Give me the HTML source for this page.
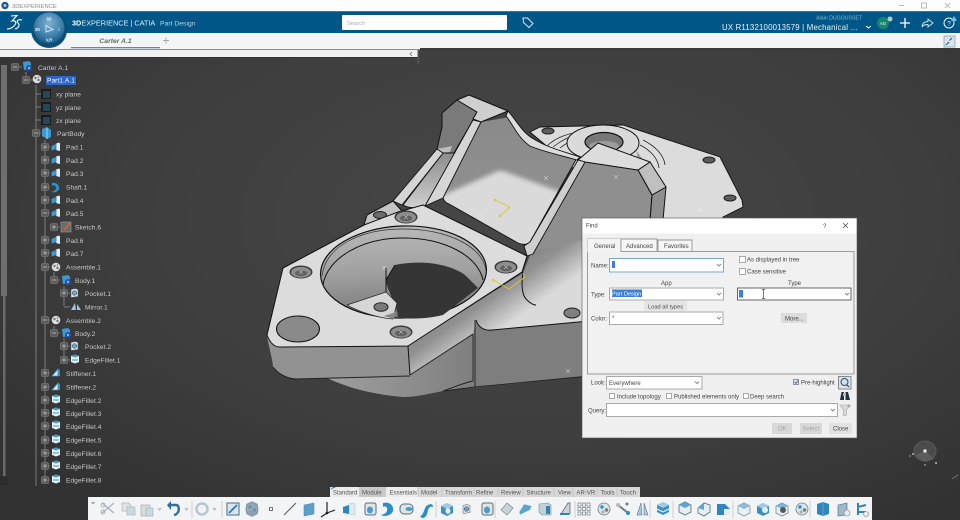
<!DOCTYPE html>
<html><head><meta charset="utf-8"><style>
html,body{margin:0;padding:0;width:960px;height:520px;overflow:hidden;background:#3c3c3c}
svg{position:absolute;left:0;top:0;display:block;filter:blur(.3px)}
text{font-family:"Liberation Sans",sans-serif}
.t text{font-size:6.6px;fill:#c8c8c8;letter-spacing:.05px}
.d text{font-size:6px;fill:#444}
.tb text{font-size:6px;fill:#555}
</style></head><body>
<svg width="960" height="520" viewBox="0 0 960 520" xmlns="http://www.w3.org/2000/svg">
<defs>
<filter id="soft" x="-20%" y="-20%" width="140%" height="140%"><feGaussianBlur stdDeviation="2.500"/></filter>
<clipPath id="pocketclip"><path d="M481 122 510 117 520 130 543 148 577 158 530 242C527 245 523 245 518 243L449 204C446 203 444 201 443 198z"/></clipPath>
<radialGradient id="bg" cx="55%" cy="42%" r="70%"><stop offset="0" stop-color="#474747"/><stop offset=".6" stop-color="#3e3e3e"/><stop offset="1" stop-color="#323232"/></radialGradient>
<linearGradient id="wall" x1="0" y1="0" x2="0" y2="1"><stop offset="0" stop-color="#8a8a8a"/><stop offset=".55" stop-color="#8f8f8f"/><stop offset="1" stop-color="#a8a8a8"/></linearGradient>
<linearGradient id="body" gradientUnits="userSpaceOnUse" x1="508" y1="274" x2="532" y2="308"><stop offset="0" stop-color="#8a8a8a"/><stop offset=".25" stop-color="#929292"/><stop offset="1" stop-color="#dadada"/></linearGradient>
<linearGradient id="slope" x1="0" y1="0" x2="0" y2="1"><stop offset="0" stop-color="#8c8c8c"/><stop offset="1" stop-color="#d0d0d0"/></linearGradient>
<linearGradient id="cyl" x1="0" y1="0" x2="1" y2="0"><stop offset="0" stop-color="#a0a0a0"/><stop offset=".6" stop-color="#7c7c7c"/><stop offset="1" stop-color="#6c6c6c"/></linearGradient>
<linearGradient id="hw" x1="0" y1="0" x2="0" y2="1"><stop offset="0" stop-color="#b8b8b8"/><stop offset=".5" stop-color="#a0a0a0"/><stop offset="1" stop-color="#777"/></linearGradient>
<radialGradient id="comp" cx="50%" cy="35%" r="70%"><stop offset="0" stop-color="#7fb2d2"/><stop offset=".55" stop-color="#4485ae"/><stop offset="1" stop-color="#0e5480"/></radialGradient>
<g id="pad"><path d="M-4.500-1 0-3v5l-4.500 1.500z" fill="#3a9bd0"/><path d="M0-3.500 3-4.500 4-3.500V4L0 3z" fill="#e4eef4"/><path d="M0-3.500V3" stroke="#2878a8" stroke-width=".8"/></g>
<g id="plane"><rect x="-5" y="-5" width="10" height="10" fill="#1c1c1c"/><rect x="-3" y="-3" width="7" height="7" fill="#1f4a5e"/></g>
<g id="ef"><path d="M-4-3 0-4.500 4-3V3L0 4.500-4 3z" fill="#e8f0f4"/><path d="M-4-3 0-4.500 4-3 0-1.500z" fill="#3a9bd0"/><path d="M-3 1 3 1" stroke="#3a9bd0"/></g>
<g id="stf"><path d="M-4 3 2 3 2-4z" fill="#d8e6ee" stroke="#3a8fc0" stroke-width=".8"/><path d="M2-4 4-3V3L2 3z" fill="#3a8fc0"/></g>
<g id="ps"><path d="M-4-3.500 0-4.500 3-3.500V3.500L-4 4.500z" fill="#dfe7ec" stroke="#556" stroke-width=".5"/><circle cx="-.5" cy="0" r="2.300" fill="#6fa8c8" stroke="#234" stroke-width=".5"/></g>
<g id="as"><circle r="4.300" fill="#ddd"/><circle cx="-1.500" cy="-1" r="1.200" fill="#777"/><circle cx="1.500" cy="1" r="1.200" fill="#777"/><circle cx="1.500" cy="-2" r=".8" fill="#777"/></g>
<g id="bd"><path d="M-4-4 2-5 4-3V3L-3 4z" fill="#3a9bd0"/><circle cx="2" cy="2" r="3" fill="#1d4fb4"/><circle cx="2" cy="2" r="1.200" fill="#8fb6e8"/></g>
<g id="mi"><rect x="-3.500" y="-3.500" width="7" height="7" rx="1" fill="#5c5c5c" stroke="#858585" stroke-width=".6"/><path d="M-2 0H2" stroke="#aaa"/></g>
<g id="pl"><rect x="-3.500" y="-3.500" width="7" height="7" rx="1" fill="#5c5c5c" stroke="#858585" stroke-width=".6"/><path d="M-2 0H2M0-2V2" stroke="#aaa"/></g>
<path id="xm" d="M-2-2 2 2M-2 2 2-2" stroke="#eaeaea" stroke-width=".5" fill="none"/>
<g id="cb"><ellipse rx="11.500" ry="6.500" fill="#3a3a3a"/><ellipse rx="10" ry="5.400" cy=".3" fill="#8e8e8e"/><ellipse rx="6" ry="3" cy="1.300" fill="#626262"/></g>
<g id="tblue"><path d="M-6-3 0-6 6-3V4L0 7-6 4z" fill="#3a8fc4"/><path d="M-6-3 0 0 6-3 0-6z" fill="#9ecbe4"/></g>
<g id="twhite"><path d="M-6-3 0-6 6-3V4L0 7-6 4z" fill="#e7eef2" stroke="#4d6b7e" stroke-width=".8"/><path d="M-6-3 0 0 6-3 0-6z" fill="#5ba6d2"/></g>
<g id="tgear"><circle r="6" fill="#dfe4e7" stroke="#6d7e88" stroke-width=".8"/><circle cx="-2" cy="-2" r="1.700" fill="#2e8dc5"/><circle cx="2.500" cy="1" r="1.700" fill="#777"/><circle cx="-1" cy="3" r="1.500" fill="#aaa"/></g>
<g id="tcup"><rect x="-5" y="-6" width="11" height="12" rx="2" fill="#dfe6ea" stroke="#5d6e78"/><ellipse cy="1" rx="3" ry="3.500" fill="#4a9ccd"/></g>
</defs>

<rect width="960" height="520" fill="url(#bg)"/>

<!-- ===== 3D PART ===== -->
<g stroke-linejoin="round">
<!-- lower cylinder -->
<path d="M320 375C340 384 360 393 403 397C418 397 432 393 443 391L600 375V320H400z" fill="url(#cyl)"/>
<!-- main right body with chamfer -->
<path d="M408 346 523 273 530 255 548 232 600 215V325L492 330C484 331 478 327 476 320L473 334 410 375z" fill="url(#body)"/>
<!-- right block side -->
<path d="M475 387 476 320C478 327 484 331 492 330L600 320V375z" fill="#7e7e7e"/>
<path d="M476 320C478 327 484 331 492 330L600 320" stroke="#111" fill="none"/>
<path d="M475 320V387M443 391 475 387 600 375" stroke="#222" fill="none" stroke-width=".9"/>
<path d="M523 272C521 285 522 296 527 300 530 303 533 305 536 305" stroke="#111" fill="none"/>
<path d="M473 334V381C463 383 455 387 443 391" stroke="#222" fill="none" stroke-width=".9"/>
<path d="M473 334 410 375" stroke="#222" fill="none"/>
<!-- plate side -->
<path d="M267 335C268 345 273 360 273 367 280 376 290 379 296 379L410 376 408 346 280 347C274 347 270 343 267 335z" fill="#929292"/>
<path d="M273 367C280 376 290 379 296 379L410 376" stroke="#222" fill="none"/>
<path d="M408 346 410 375" stroke="#111"/>
<!-- right flange -->
<path d="M530 132 540 127 623 125 720 157 742 200 743 207 723 217 723 240 600 240 575 170z" fill="#dcdcdc" stroke="#111" stroke-width=".9"/>
<ellipse cx="709" cy="160" rx="6" ry="3" fill="#5c5c5c" stroke="#222"/>
<ellipse cx="730" cy="198" rx="6" ry="3" fill="#5c5c5c" stroke="#222"/>
<ellipse cx="548" cy="131" rx="6" ry="3" fill="#5c5c5c" stroke="#222"/>
<!-- boss rings -->
<path d="M547 146C556 137 570 133 580 132M643 140C655 146 664 155 665 165M640 145C650 150 658 158 659 168" stroke="#222" fill="none" stroke-width=".8"/>
<path d="M560 148C568 142 575 138 585 136M553 147C562 140 570 136 578 134" stroke="#222" fill="none" stroke-width=".7"/>
<path d="M636 150 652 172 640 170z" fill="#a0a0a0"/>
<ellipse cx="603" cy="143" rx="36" ry="18" fill="#dadada" stroke="#111"/>
<ellipse cx="604" cy="142" rx="19" ry="9.500" fill="#787878" stroke="#111" stroke-width="1.200"/>
<ellipse cx="604" cy="146" rx="15" ry="5" fill="#9c9c9c"/>
<!-- back-left tab -->
<path d="M364 225 367 215 393 201 410 220z" fill="#c4c4c4" stroke="#111"/>
<ellipse cx="380" cy="215" rx="6.500" ry="3.500" fill="#6c6c6c" stroke="#222"/>
<!-- back wall -->
<path d="M442 113 457 100 477 112 473 120 454 153 443 153 437 149 442 127z" fill="#7a7a7a" stroke="#111"/>
<path d="M437 149 452 146 450 152 443 153z" fill="#bdbdbd"/>
<!-- rib -->
<path d="M403 205 443 153 455 153 425 206C418 209 408 208 403 205z" fill="url(#slope)" stroke="#111" stroke-width=".9"/>
<path d="M393 201 437 149 443 153 402 205z" fill="#d5d5d5" stroke="#111" stroke-width=".9"/>
<!-- pocket walls + soft floor -->
<path d="M481 122 510 117 520 130 543 148 577 158 527 244 443 197z" fill="url(#wall)"/>
<g clip-path="url(#pocketclip)"><path d="M432 200 498 171 503 171 566 194 530 254 470 230z" fill="#dadada" filter="url(#soft)"/></g>
<path d="M473 120 425 206 443 198 481 122z" fill="#d5d5d5" stroke="#111" stroke-width=".9"/>
<path d="M443 198C444 201 446 203 449 204L518 243C523 245 527 245 530 242L577 158" fill="none" stroke="#111" stroke-width=".9"/>
<!-- curved band -->
<path d="M508 111C516 120 522 132 532 138 548 148 562 151 580 157L577 160C560 155 544 152 530 146 518 138 514 126 506 116z" fill="#dcdcdc" stroke="#111" stroke-width=".9"/>
<!-- top cap -->
<path d="M457 100 469 95 508 111 481 122 473 119 477 112z" fill="#cfcfcf" stroke="#111"/>
<!-- right pocket -->
<path d="M585 162 638 170 652 195 650 222 600 240 582 240 535 250z" fill="#8f8f8f"/>
<path d="M652 195 666 187 663 220 650 220z" fill="#8e8e8e" stroke="#111"/>
<path d="M638 170 650 162 666 187 652 195z" fill="#c0c0c0" stroke="#111"/>
<path d="M585 162 638 170 652 195 650 220" stroke="#111" fill="none" stroke-width=".8"/>
<path d="M578 160 598 143 650 162 638 170 585 162z" fill="#dcdcdc" stroke="#111"/>
<path d="M578 160 585 162 533 254 527 256 524 246 530 242z" fill="#cfcfcf" stroke="#111" stroke-width=".9"/>
<!-- plate top -->
<path d="M283 268 364 225 398 212 423 205 527 256 522 272 408 346 280 347C274 347 270 343 267 335z" fill="#dcdcdc" stroke="#111" stroke-width="1"/>
<!-- big bore -->
<ellipse cx="403.500" cy="272" rx="83" ry="46" transform="rotate(-2 403 272)" fill="url(#hw)" stroke="#111" stroke-width="1.200"/>
<path d="M323 285C327 258 362 238 403 238 445 238 478 256 483 280" fill="none" stroke="#111"/>
<path d="M322 276C326 245 362 229 403 229 445 229 482 245 486 270" fill="none" stroke="#333" stroke-width=".7"/>
<path d="M395 265C420 260 448 263 465 275L478 288 443 315C428 319 410 319 398 318 398 305 387 292 386 280z" fill="#353535"/>
<path d="M386 268 386 292M395 265 386 280" stroke="#111" fill="none"/>
<path d="M347 305 386 292 397 303 393 319C378 318 360 312 347 305z" fill="#d6d6d6" stroke="#222" stroke-width=".7"/>
<ellipse cx="381" cy="307" rx="7" ry="4.300" fill="#7a7a7a" stroke="#222"/>
<path d="M384 316 396 312 394 319z" fill="#888"/>
<!-- holes -->
<use href="#cb" x="406" y="217"/>
<use href="#cb" x="301" y="272"/>
<use href="#cb" x="506" y="267"/>
<use href="#cb" x="401" y="332"/>
<ellipse cx="298" cy="329" rx="21.500" ry="13" fill="#8a8a8a" stroke="#111" stroke-width="1.100"/>
<ellipse cx="572" cy="313" rx="8" ry="5" fill="#7e7e7e" stroke="#222"/>
<!-- markers -->
<path d="M495 200 510 207 500 216M493 280 509 289 525 277 523 273" fill="none" stroke="#d8c73a" stroke-width=".9"/>
<circle cx="495" cy="200" r="1.200" fill="#d8c73a"/><circle cx="500" cy="216" r="1.200" fill="#d8c73a"/><circle cx="493" cy="280" r="1.200" fill="#d8c73a"/>
<use href="#xm" x="546" y="178"/><use href="#xm" x="616" y="177"/><use href="#xm" x="700" y="210"/><use href="#xm" x="568" y="371"/><use href="#xm" x="384" y="268"/><use href="#xm" x="301" y="272"/><use href="#xm" x="406" y="217"/><use href="#xm" x="506" y="267"/><use href="#xm" x="401" y="332"/><use href="#xm" x="480" y="215"/>
</g>

<!-- triad -->
<g>
<ellipse cx="925" cy="451" rx="11" ry="10" fill="#4b4b4b" stroke="#5a5a5a"/>
<path d="M915 455 925 451 934 459 925 462z" fill="#5c5c5c"/>
<rect x="923.500" y="449.500" width="3" height="3" fill="#eee"/>
<rect x="912" y="453" width="2" height="2" fill="#999"/><rect x="935" y="462" width="2" height="2" fill="#999"/><rect x="924" y="464" width="2" height="2" fill="#777"/><rect x="909" y="455" width="2" height="2" fill="#666"/>
<path d="M952 479 958 475" stroke="#777"/>
</g>

<!-- ===== TREE ===== -->
<rect x="1" y="65" width="6" height="231" fill="#6f6f6f"/>
<rect x="3" y="296" width="2.500" height="180" fill="#6a6a6a"/>
<rect x="0" y="477" width="8" height="8" fill="#2d2d2d"/>
<g stroke="#8e8e8e" stroke-width=".8" fill="none">
<path d="M26 72V80M36 85V486M45 140V480M54 272V280M64 286V306M54 326V333M64 338V360M15 67H22M26 80H33M36 94H41M36 107H41M36 120H41M36 133H41"/>
<path d="M45 147H50M45 160H50M45 173H50M45 187H50M45 200H50M45 213H50M45 240H50M45 253H50M45 267H50M45 320H50M45 373H50M45 387H50M45 400H50M45 413H50M45 426H50M45 440H50M45 453H50M45 466H50M45 480H50M54 280H60M54 333H60M54 227H60M64 293H70M64 307H70M64 346H70M64 360H70"/>
</g>
<g>
<use href="#mi" x="15" y="67"/><use href="#mi" x="26" y="80"/><use href="#mi" x="36" y="133"/><use href="#mi" x="45" y="213"/><use href="#mi" x="45" y="267"/><use href="#mi" x="54" y="280"/><use href="#mi" x="45" y="320"/><use href="#mi" x="54" y="333"/>
<use href="#pl" x="45" y="147"/><use href="#pl" x="45" y="160"/><use href="#pl" x="45" y="173"/><use href="#pl" x="45" y="187"/><use href="#pl" x="45" y="200"/><use href="#pl" x="54" y="227"/><use href="#pl" x="45" y="240"/><use href="#pl" x="45" y="253"/><use href="#pl" x="64" y="293"/><use href="#pl" x="64" y="346"/><use href="#pl" x="64" y="360"/><use href="#pl" x="45" y="373"/><use href="#pl" x="45" y="387"/><use href="#pl" x="45" y="400"/><use href="#pl" x="45" y="413"/><use href="#pl" x="45" y="426"/><use href="#pl" x="45" y="440"/><use href="#pl" x="45" y="453"/><use href="#pl" x="45" y="466"/><use href="#pl" x="45" y="480"/>
<use href="#bd" x="27" y="66"/><use href="#as" x="37" y="79"/><use href="#plane" x="46" y="94"/><use href="#plane" x="46" y="107"/><use href="#plane" x="46" y="120"/>
<path d="M42 129 47 127 51 130V137L47 139 42 136z" fill="#3a9bd0"/><path d="M47 128V139" stroke="#bfe0f0" stroke-width=".8"/>
<use href="#pad" x="56" y="147"/><use href="#pad" x="56" y="160"/><use href="#pad" x="56" y="173"/>
<path d="M52 183C57 182 60 186 59 189 58 192 54 193 51 192 55 191 57 189 56 187 55 185 53 185 52 186z" fill="#2f93c9"/>
<use href="#pad" x="56" y="200"/><use href="#pad" x="56" y="213"/>
<rect x="61" y="222" width="10" height="10" fill="#6a6a6a" stroke="#999" stroke-width=".6"/><path d="M64 230 70 223" stroke="#c96a2c" stroke-width="1.500"/>
<use href="#pad" x="56" y="240"/><use href="#pad" x="56" y="253"/><use href="#as" x="56" y="267"/><use href="#bd" x="66" y="280"/><use href="#ps" x="75" y="293"/>
<path d="M71 310 75 303 76 310zM77 310 77 304 81 310z" fill="#9ec6dc"/>
<use href="#as" x="56" y="320"/><use href="#bd" x="66" y="333"/><use href="#ps" x="75" y="346"/><use href="#ef" x="75" y="359"/>
<use href="#stf" x="56" y="373"/><use href="#stf" x="56" y="387"/><use href="#ef" x="56" y="399"/><use href="#ef" x="56" y="412"/><use href="#ef" x="56" y="425"/><use href="#ef" x="56" y="439"/><use href="#ef" x="56" y="452"/><use href="#ef" x="56" y="465"/><use href="#ef" x="56" y="479"/>
</g>
<rect x="46" y="76" width="30" height="9" fill="#2c66c8"/>
<g class="t">
<text x="38" y="70">Carter A.1</text>
<text x="47" y="82.500" style="fill:#fff">Part1.A.1</text>
<text x="56" y="96.500">xy plane</text><text x="56" y="110">yz plane</text><text x="56" y="123">zx plane</text>
<text x="57" y="136">PartBody</text>
<text x="66" y="149.500">Pad.1</text><text x="66" y="163">Pad.2</text><text x="66" y="176">Pad.3</text><text x="66" y="189.500">Shaft.1</text><text x="66" y="203">Pad.4</text><text x="66" y="216">Pad.5</text>
<text x="75" y="229.500">Sketch.6</text>
<text x="66" y="243">Pad.6</text><text x="66" y="256">Pad.7</text><text x="66" y="269.500">Assemble.1</text>
<text x="75" y="283">Body.1</text><text x="85" y="296">Pocket.1</text><text x="85" y="309.500">Mirror.1</text>
<text x="66" y="323">Assemble.2</text><text x="75" y="336">Body.2</text><text x="85" y="349">Pocket.2</text><text x="85" y="362.500">EdgeFillet.1</text>
<text x="66" y="376">Stiffener.1</text><text x="66" y="389.500">Stiffener.2</text>
<text x="66" y="403">EdgeFillet.2</text><text x="66" y="416">EdgeFillet.3</text><text x="66" y="429">EdgeFillet.4</text><text x="66" y="442.500">EdgeFillet.5</text><text x="66" y="456">EdgeFillet.6</text><text x="66" y="469">EdgeFillet.7</text><text x="66" y="482.500">EdgeFillet.8</text>
</g>

<!-- ===== TOP CHROME ===== -->
<rect width="960" height="11" fill="#fdfdfd"/>
<circle cx="5" cy="5.500" r="3.700" fill="#1d5a86"/><circle cx="5" cy="5.500" r="1.500" fill="#a8c8dc"/>
<text x="12" y="8" font-size="5.800" fill="#8a8a8a">3DEXPERIENCE</text>
<path d="M899 5.500H904" stroke="#bbb"/><rect x="921.500" y="3" width="5" height="5" fill="none" stroke="#bbb"/><path d="M945 3 950 8M945 8 950 3" stroke="#bbb"/>
<rect y="11" width="960" height="22" fill="#005686"/>
<rect y="11" width="960" height="1" fill="#2d7ca8"/>
<rect y="33" width="960" height="16" fill="#f4f5f7"/>
<rect y="49" width="420" height="1" fill="#8c8c8c"/>
<rect y="48" x="420" width="540" height="2" fill="#3a3a3a"/>
<rect y="50" width="418" height="7" fill="#f0f0f0"/>
<rect y="57" width="418" height="1" fill="#333"/>
<rect x="417.500" y="50" width="1.500" height="14" fill="#555"/>
<path d="M412 52 410 54 412 56" stroke="#666" stroke-width=".7" fill="none"/>
<rect x="71" y="47" width="89" height="1.300" fill="#5c8bab"/>
<text x="115.500" y="43" font-size="6.800" font-style="italic" font-weight="bold" fill="#666" text-anchor="middle">Carter A.1</text>
<path d="M163 40.500H169M166 37.500V43.500" stroke="#aaa"/>
<!-- 3DS logo -->
<path d="M11 16 17 15.500 12 21C16 20 17 23 14 26 12 28 9 29 7 29M22 20C18 19 16 21 18 23 20 25 19 28 15 29" stroke="#fff" stroke-width="1.100" fill="none"/>
<!-- compass -->
<circle cx="49" cy="30" r="18" fill="#0b4e78"/>
<circle cx="49" cy="28" r="15.500" fill="url(#comp)"/>
<path d="M46 25.500 53 29.500 46 32z" fill="none" stroke="#e8f2f8" stroke-width=".8"/>
<g font-size="4.200" fill="#eaf4fa" font-weight="bold" text-anchor="middle"><text x="49" y="20.500">3D</text><text x="37.500" y="31">3D</text><text x="59" y="31">i</text><text x="49" y="41.500">V,R</text></g>
<!-- title -->
<text x="72" y="25.500" font-size="7.300" fill="#dfeef6"><tspan font-weight="bold" fill="#fff">3D</tspan>EXPERIENCE | CATIA</text>
<text x="160" y="25.500" font-size="6.800" fill="#bcd6e6">Part Design</text>
<!-- search -->
<rect x="342" y="15" width="165" height="15" rx="1" fill="#fff"/>
<text x="347" y="25" font-size="5.800" fill="#aaa">Search</text>
<path d="M523 18H527.500L533 23.500 529 27.500 523.500 22.500z" fill="none" stroke="#d7e8f2" stroke-width="1"/>
<!-- right -->
<text x="862" y="19.500" font-size="5.200" fill="#8db9d2" text-anchor="end">Alain DUGOUSSET</text>
<text x="722" y="30" font-size="7.800" fill="#e8f2f8" letter-spacing=".2">UX R1132100013579 | Mechanical ...</text>
<path d="M866 26 868.500 28 871 26" stroke="#fff" fill="none"/>
<circle cx="883" cy="23" r="6" fill="#16876e"/><text x="883" y="25" font-size="4.500" fill="#d8f0e8" text-anchor="middle">AD</text>
<circle cx="890" cy="19" r="2.500" fill="#b8c8d0"/>
<path d="M900 23H910M905 18V28" stroke="#fff" stroke-width="1.300"/>
<path d="M922 27C922 23 925 21.500 928 21.500V19L933 23 928 27V24.500C925 24.500 923 25 922 27z" fill="none" stroke="#d7e8f2" stroke-width=".9"/>
<circle cx="949" cy="23" r="5" fill="none" stroke="#e8f2f8"/><text x="949" y="25.500" font-size="6.500" fill="#e8f2f8" text-anchor="middle">?</text>
<path d="M954 16 957 21H951z" fill="#6cc2ee"/>
<rect x="944" y="36" width="11" height="11" fill="#dde4e8" stroke="#6f8a9a" stroke-width=".6"/>
<path d="M946 45 949 42M952 38 949.500 40.500" stroke="#1f6890" stroke-width="1.200"/>

<!-- ===== FIND DIALOG ===== -->
<g class="d">
<rect x="582" y="218" width="275" height="220" fill="#f0f0f0" stroke="#555" stroke-width=".6"/>
<rect x="582.500" y="218.500" width="274" height="15" fill="#fff"/>
<text x="586" y="227.500" font-size="6.400">Find</text>
<text x="823" y="228" font-size="7" fill="#555">?</text>
<path d="M843 223 848 228M843 228 848 223" stroke="#444" stroke-width=".7"/>
<rect x="587.500" y="251.500" width="266.500" height="122.500" fill="#f1f1f1" stroke="#9c9c9c"/>
<path d="M621 251V239H657V251M658 251V240H692V251" fill="#f6f6f6" stroke="#777" stroke-width=".7"/>
<rect x="587.500" y="238.500" width="33" height="14" fill="#f4f4f4"/>
<path d="M587.500 252V238.500H620.500V252" fill="none" stroke="#c4c4c4" stroke-width=".7"/>
<text x="594" y="248">General</text><text x="626" y="248">Advanced</text><text x="664" y="248">Favorites</text>

<text x="591" y="267.500">Name:</text>
<rect x="609.500" y="258.500" width="114" height="13.500" fill="#fff" stroke="#7aa6c4"/>
<rect x="612" y="261" width="3" height="7" fill="#3a80d8"/>
<path d="M717 264 719 266 721 264" stroke="#888" fill="none"/>
<rect x="739.500" y="256.500" width="6" height="6" fill="#fff" stroke="#777" stroke-width=".6"/><text x="747" y="261.500">As displayed in tree</text>
<rect x="739.500" y="268.500" width="6" height="6" fill="#fff" stroke="#777" stroke-width=".6"/><text x="747" y="273.500">Case sensitive</text>
<text x="661" y="285">App</text><text x="788" y="285">Type</text>
<text x="591" y="296.500">Type:</text>
<rect x="609.500" y="288" width="114" height="12" fill="#fff" stroke="#aaa"/>
<rect x="612" y="289.500" width="30" height="7.500" fill="#3a80d8"/>
<text x="612" y="295.500" style="fill:#fff;font-size:5.600px">Part Design</text>
<path d="M717 293 719 295 721 293" stroke="#888" fill="none"/>
<rect x="737.500" y="288" width="113.500" height="12" fill="#fff" stroke="#666"/>
<rect x="739" y="290" width="4" height="7.500" fill="#3a80d8"/>
<path d="M762 289.500H765M763.500 289.500V298.500M762 298.500H765" stroke="#444" stroke-width=".7" fill="none"/>
<path d="M845 293 847 295 849 293" stroke="#888" fill="none"/>
<rect x="644" y="301" width="43" height="10" fill="#e4e4e4"/>
<text x="648" y="308.500" style="font-size:5.700px">Load all types</text>
<text x="591" y="320.500">Color:</text>
<rect x="609.500" y="312" width="113.500" height="12.500" fill="#fff" stroke="#aaa"/>
<text x="612" y="320">*</text>
<path d="M717 317 719 319 721 317" stroke="#888" fill="none"/>
<rect x="781" y="313" width="26" height="10" fill="#dcdcdc"/>
<text x="785" y="320.500">More...</text>

<text x="591" y="384.500">Look:</text>
<rect x="606.500" y="376.500" width="95.500" height="12.500" fill="#fff" stroke="#aaa"/>
<text x="609" y="385">Everywhere</text>
<path d="M695 381.500 697 383.500 699 381.500" stroke="#888" fill="none"/>
<rect x="793.500" y="379.500" width="5" height="5" fill="#dfeaf2" stroke="#557" stroke-width=".6"/>
<path d="M794.500 382 796 383.500 798 380.500" stroke="#246" stroke-width=".7" fill="none"/>
<text x="801" y="384.500">Pre-highlight</text>
<rect x="838.500" y="376.500" width="12.500" height="12.500" fill="#dde3e7" stroke="#888"/>
<circle cx="844.500" cy="382" r="3.500" fill="#cfe0ea" stroke="#2b4e68"/><path d="M847 385 849 387" stroke="#2b4e68" stroke-width="1.200"/>
<rect x="609.500" y="393.500" width="5" height="5" fill="#fff" stroke="#777" stroke-width=".6"/><text x="617" y="398.500">Include topology</text>
<rect x="666.500" y="393.500" width="5" height="5" fill="#fff" stroke="#777" stroke-width=".6"/><text x="674" y="398.500">Published elements only</text>
<rect x="743.500" y="393.500" width="5" height="5" fill="#fff" stroke="#777" stroke-width=".6"/><text x="750" y="398.500">Deep search</text>
<path d="M840 400 841.500 392H844V400zM845.500 400V392H848L850 400z" fill="#1f2f52"/><rect x="843" y="393" width="3" height="3" fill="#d8b83e"/>
<text x="588" y="412.500">Query:</text>
<rect x="606.500" y="403.500" width="231" height="13" fill="#fff" stroke="#aaa"/>
<path d="M831 409 833 411 835 409" stroke="#888" fill="none"/>
<path d="M840 405H850L846.500 410V415L843.500 416V410z" fill="#d8d8d8" stroke="#aaa" stroke-width=".6"/><circle cx="849" cy="406" r="1.500" fill="#aaa"/>
<rect x="772" y="423" width="20" height="11" fill="#d8d8d8"/><text x="778" y="430.500" style="fill:#a5a5a5">OK</text>
<rect x="800" y="423" width="22" height="11" fill="#d8d8d8"/><text x="802.500" y="430.500" style="fill:#a5a5a5">Select</text>
<rect x="829" y="423" width="23" height="11" fill="#e2e2e2"/><text x="833" y="430.500">Close</text>
</g>

<!-- ===== BOTTOM TOOLBAR ===== -->
<g class="tb">
<rect x="330" y="487" width="310" height="10" fill="#d8d8d8"/>
<rect x="330" y="487" width="29" height="10" fill="#ececec"/><rect x="386" y="487" width="32" height="10" fill="#ececec"/>
<rect x="359" y="487" width="27" height="10" fill="#c9c9c9"/>
<path d="M330 490 333 487H336z" fill="#2d7dac"/>
<path d="M418 487V497M442 487V497M474 487V497M498 487V497M523 487V497M554 487V497M573 487V497M597 487V497M617 487V497" stroke="#bbb" stroke-width=".6"/>
<text x="333" y="494.500">Standard</text><text x="362" y="494.500">Module</text><text x="389.500" y="494.500">Essentials</text><text x="421" y="494.500">Model</text><text x="445" y="494.500">Transform</text><text x="476" y="494.500">Refine</text><text x="501" y="494.500">Review</text><text x="526.500" y="494.500">Structure</text><text x="558" y="494.500">View</text><text x="576.500" y="494.500">AR-VR</text><text x="600.500" y="494.500">Tools</text><text x="620" y="494.500">Touch</text>
<rect x="88" y="497" width="784" height="23" fill="#f3f4f5"/>
<path d="M91.500 502 93 503.500 94.500 502" stroke="#888" fill="none"/>
<path d="M192 501V518M222 501V518M436 501V518M495 501V518M575 501V518M650 501V518M673 501V518M733 501V518M810 501V518" stroke="#d0d0d0"/>
<!-- scissors -->
<path d="M102 503 114 513M114 503 102 513" stroke="#a8b4bb" stroke-width="1.300"/><circle cx="103" cy="512" r="2" fill="none" stroke="#a8b4bb"/><circle cx="103" cy="505" r="2" fill="none" stroke="#a8b4bb"/>
<!-- copy paste -->
<path d="M122 503H129L131 506V511H122z" fill="#dfe3e6" stroke="#b0b6ba" stroke-width=".7"/><rect x="127" y="507" width="8" height="8" fill="#c9d9e3" stroke="#a8b4bb" stroke-width=".7"/>
<rect x="141" y="505" width="9" height="11" fill="#d8dcdf" stroke="#aab" stroke-width=".7"/><rect x="146" y="508" width="7" height="8" fill="#c9d9e3" stroke="#a8b4bb" stroke-width=".7"/>
<path d="M158 508 159.500 510 161 508M185 508 186.500 510 188 508M213 508 214.500 510 216 508" stroke="#aaa" fill="none"/>
<!-- undo -->
<path d="M169 505H176C180 505 180 514 174 515" fill="none" stroke="#2c6ea3" stroke-width="2.400"/><path d="M171 501 167 505 171 510z" fill="#2c6ea3"/>
<!-- update -->
<circle cx="202" cy="509" r="5.500" fill="none" stroke="#b5c7d3" stroke-width="2.500"/><circle cx="202" cy="509" r="2" fill="#eef"/>
<!-- sketch -->
<rect x="227" y="503" width="12" height="12" fill="#d9e6ee" stroke="#476d86"/><path d="M229 513 237 505" stroke="#2f79a8" stroke-width="1.800"/>
<use href="#tgear" x="252" y="509"/><path d="M246 504 252 501 258 504V514L252 517 246 514z" fill="#7a95a8" opacity=".75"/>
<rect x="269.500" y="507.500" width="3" height="3" fill="#fff" stroke="#555" stroke-width=".8"/>
<path d="M284 515 296 503" stroke="#555" stroke-width="1"/>
<path d="M304 505 314 503V514L304 516z" fill="#5e9fca" stroke="#4c86ad" stroke-width=".5"/>
<path d="M327 502V513M327 513 335 510M327 513 321 517" stroke="#222" stroke-width="1.200"/><circle cx="327" cy="513" r="1.400" fill="#222"/>
<g transform="translate(349 509)"><path d="M-6-2 0-4V5L-6 4z" fill="#2f85bd"/><path d="M0-5 4-6 6-5V6L0 5z" fill="#dfe8ee" stroke="#496" stroke-width=".2"/></g>
<use href="#tcup" x="370" y="509"/>
<path d="M383 503C391 501 394 507 393 511 391 516 384 517 381 515 386 514 388 511 387 508 386 506 384 506 383 507z" fill="#2c8cc8"/>
<g transform="translate(407 509)"><rect x="-7" y="-5" width="13" height="10" rx="4" fill="#dbe4e9" stroke="#5d6e78"/><ellipse cx="2" rx="3.500" ry="2" fill="#4a9ccd"/></g>
<path d="M420 516C424 516 424 506 428 505 432 503 433 505 433 507 431 506 429 507 428 510 427 515 426 518 422 518z" fill="#2c8cc8"/>
<g transform="translate(447 509)"><use href="#tblue"/><ellipse cx="1" cy="2" rx="2.500" ry="3" fill="#e7eef2"/></g>
<use href="#ps" x="467" y="509"/>
<use href="#tcup" x="487" y="509"/>
<path d="M501 510 507 503 513 508 507 515z" fill="#c9d4da" stroke="#78909c" stroke-width=".7"/>
<path d="M519 512 524 504 532 506 530 510 520 515z" fill="#59a4d2" stroke="#e8eef2" stroke-width=".6"/>
<g transform="translate(545 509)"><path d="M-6-5 3-6 6-4V6H-3L-6 3z" fill="#c5d1d8" stroke="#78909c" stroke-width=".6"/><path d="M1-3H5V5H1z" fill="#2f85bd"/></g>
<path d="M561 514 568 503 570 503V514z" fill="#cbd4d9" stroke="#556" stroke-width=".7"/><path d="M560 513H569V515H560z" fill="#2f85bd"/>
<g fill="#fff" stroke="#5a6a74" stroke-width=".6"><rect x="578" y="503" width="3" height="3"/><rect x="582.500" y="503" width="3" height="3"/><rect x="587" y="503" width="3" height="3"/><rect x="578" y="507.500" width="3" height="3"/><rect x="582.500" y="507.500" width="3" height="3"/><rect x="587" y="507.500" width="3" height="3"/><rect x="578" y="512" width="3" height="3"/><rect x="582.500" y="512" width="3" height="3"/><rect x="587" y="512" width="3" height="3"/></g>
<use href="#tgear" x="604" y="509"/>
<path d="M618 505 628 513" stroke="#6d7e88" stroke-width="2"/><circle cx="618" cy="505" r="2" fill="#bbb"/><circle cx="628" cy="513" r="2" fill="#2e8dc5"/><circle cx="627" cy="504" r="1.500" fill="#777"/>
<path d="M637 515 641 503 642 515zM644 515 644 503 648 515z" fill="#a8cce0" stroke="#557" stroke-width=".5"/>
<use href="#tblue" x="663" y="508"/><path d="M657 509 663 512 669 509" stroke="#fff" fill="none"/>
<use href="#twhite" x="685" y="508"/>
<path d="M698 508 704 503 710 505V512L704 516 698 513z" fill="#e7eef2" stroke="#4d6b7e" stroke-width=".8"/><path d="M704 503V510L698 508z" fill="#5ba6d2"/>
<path d="M717 504H725L730 509V515H717z" fill="#2f85bd"/><path d="M724 509 730 509 730 515 724 515z" fill="#e7eef2"/>
<use href="#twhite" x="744" y="509" opacity=".7"/><use href="#tblue" x="763" y="509"/><circle cx="765" cy="510" r="3" fill="#e7eef2"/>
<use href="#twhite" x="782" y="509" opacity=".8"/><circle cx="783" cy="510" r="3" fill="#556"/>
<use href="#tgear" x="802" y="509"/>
<path d="M817 504 823 502 829 504V514L823 516 817 514z" fill="#2f85bd"/><path d="M823 502V516" stroke="#7ab8dc" stroke-width=".6"/>
<path d="M838 505 847 503V515L838 516z" fill="#9db9ca" stroke="#4d6b7e" stroke-width=".6"/><circle cx="847" cy="513" r="3" fill="#e7eef2" stroke="#888" stroke-width=".6"/>
<path d="M858 503V515M858 507 866 505M858 512 866 512" stroke="#2f85bd" stroke-width="2"/><circle cx="866" cy="514" r="2.500" fill="#e7eef2" stroke="#888" stroke-width=".6"/>
</g>
</svg>
</body></html>
